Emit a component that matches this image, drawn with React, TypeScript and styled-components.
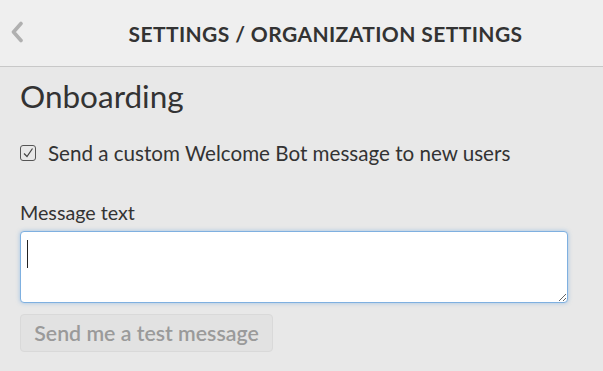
import styled, { createGlobalStyle } from 'styled-components';

const GlobalStyle = createGlobalStyle`
  html, body {
    margin: 0;
    padding: 0;
    background: #e8e8e8;
    font-family: Lato, "Noto Sans", sans-serif;
    color: #333;
  }
`;

const Page = styled.div`
  width: 603px;
  height: 371px;
  overflow: hidden;
  background: #e8e8e8;
`;

const Header = styled.div`
  display: flex;
  align-items: center;
  height: 66px;
  border-bottom: 1px solid #c8c8c8;
  background: #efefef;
  position: relative;
`;

const BackButton = styled.div`
  position: absolute;
  left: 9px;
  top: 20px;
  width: 16px;
  height: 24px;
  display: flex;
  align-items: center;
  justify-content: center;
`;

const Title = styled.h1`
  flex: 1;
  margin: 0;
  padding-left: 48px;
  text-align: center;
  font-size: 21px;
  font-weight: 700;
  letter-spacing: 0.4px;
  color: #333;
`;

const Content = styled.div`
  display: flex;
  flex-direction: column;
  padding: 10px 20px 0;
`;

const SectionTitle = styled.h2`
  margin: 0;
  font-size: 31.5px;
  font-weight: 400;
  color: #333;
  line-height: 38px;
`;

const CheckRow = styled.label`
  display: flex;
  align-items: center;
  gap: 12px;
  margin-top: 26px;
  font-size: 20.6px;
  color: #333;
`;

const CheckBox = styled.span`
  width: 14px;
  height: 14px;
  border: 1px solid #555;
  border-radius: 3px;
  display: flex;
  align-items: center;
  justify-content: center;
`;

const FieldLabel = styled.div`
  margin-top: 36px;
  font-size: 19.7px;
  color: #333;
`;

const TextArea = styled.textarea`
  display: block;
  margin-top: 7px;
  width: 548px;
  height: 72px;
  box-sizing: border-box;
  border: 1px solid #7fb0e0;
  border-radius: 4px;
  background: #fff;
  box-shadow: 0 0 4px rgba(100, 160, 220, 0.55);
  outline: none;
  padding: 8px 6px;
  font-family: inherit;
  font-size: 16px;
`;

const Cursor = styled.span`
  display: block;
  width: 1px;
  height: 28px;
  background: #222;
`;

const TextAreaWrap = styled.div`
  position: relative;
  width: 548px;
  ${Cursor} {
    position: absolute;
    left: 7px;
    top: 16px;
  }
`;

const TestButton = styled.button`
  align-self: flex-start;
  margin-top: 11px;
  width: 253px;
  height: 38px;
  border: 1px solid #d9d9d9;
  border-radius: 4px;
  background: #e2e2e2;
  color: #9a9a9a;
  font-family: inherit;
  font-size: 21.3px;
  font-weight: 600;
`;

export default function App() {
  return (
    <Page>
      <GlobalStyle />
      <Header>
        <BackButton>
          <svg width="14" height="22" viewBox="0 0 14 22">
            <path d="M11 2.5 L3.5 11 L11 19.5" fill="none" stroke="#b0b0b0" strokeWidth="3.6" strokeLinecap="round" strokeLinejoin="round" />
          </svg>
        </BackButton>
        <Title>SETTINGS / ORGANIZATION SETTINGS</Title>
      </Header>
      <Content>
        <SectionTitle>Onboarding</SectionTitle>
        <CheckRow>
          <CheckBox>
            <svg width="12" height="12" viewBox="0 0 12 12">
              <path d="M2 6.5 L5 9.5 L10.5 1.5" fill="none" stroke="#444" strokeWidth="1.2" />
            </svg>
          </CheckBox>
          Send a custom Welcome Bot message to new users
        </CheckRow>
        <FieldLabel>Message text</FieldLabel>
        <TextAreaWrap>
          <TextArea />
          <Cursor />
        </TextAreaWrap>
        <TestButton disabled>Send me a test message</TestButton>
      </Content>
    </Page>
  );
}
